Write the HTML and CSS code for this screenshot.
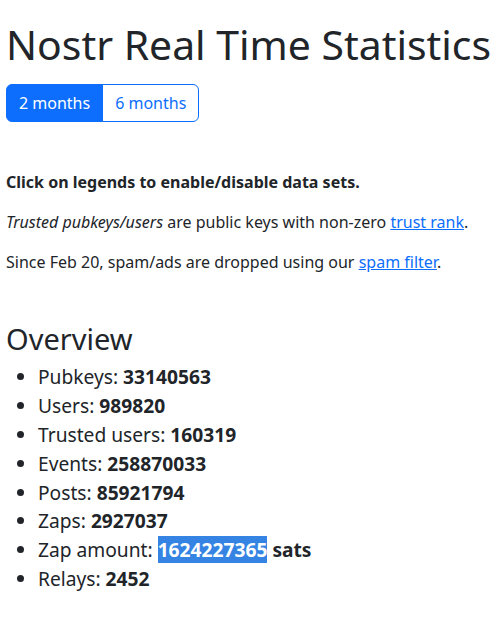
FILE: index.html
```html
<!DOCTYPE html>
<html lang="en">
<head>
<meta charset="utf-8">
<title>Nostr Real Time Statistics</title>
<link rel="stylesheet" href="styles.css">
</head>
<body>
<div class="container">
  <h1 class="title">Nostr Real Time Statistics</h1>
  <div class="btn-group">
    <button class="btn active">2 months</button>
    <button class="btn">6 months</button>
  </div>
  <p class="hint"><b>Click on legends to enable/disable data sets.</b></p>
  <p><i>Trusted pubkeys/users</i> are public keys with non-zero <a href="#">trust rank</a>.</p>
  <p>Since Feb 20, spam/ads are dropped using our <a href="#">spam filter</a>.</p>
  <h2 class="section">Overview</h2>
  <ul class="stats">
    <li>Pubkeys: <b>33140563</b></li>
    <li>Users: <b>989820</b></li>
    <li>Trusted users: <b>160319</b></li>
    <li>Events: <b>258870033</b></li>
    <li>Posts: <b>85921794</b></li>
    <li>Zaps: <b>2927037</b></li>
    <li>Zap amount: <b><span class="sel">1624227365</span> sats</b></li>
    <li>Relays: <b>2452</b></li>
  </ul>
</div>
</body>
</html>
```

FILE: styles.css
```css
* { box-sizing: border-box; }
html, body { margin: 0; padding: 0; }
body {
  font-family: "Noto Sans", "Open Sans", sans-serif;
  font-size: 16px;
  line-height: 1.5;
  color: #212529;
  background: #fff;
}
.container {
  padding: 20px 6px 0 6px;
}
.title {
  font-size: 40.9px;
  font-weight: 400;
  line-height: 1.2;
  white-space: nowrap;
  margin: 0 0 15px 0;
}
.btn-group {
  display: inline-flex;
}
.btn {
  font-family: inherit;
  font-size: 16px;
  line-height: 24px;
  padding: 6px 12px;
  border: 1px solid #0d6efd;
  background: #fff;
  color: #0d6efd;
  margin: 0;
}
.btn:first-child {
  border-radius: 6px 0 0 6px;
}
.btn:last-child {
  border-radius: 0 6px 6px 0;
  margin-left: -1px;
}
.btn.active {
  background: #0d6efd;
  color: #fff;
}
p { margin: 0 0 16px 0; }
.hint { margin-top: 48px; }
b { font-weight: 700; }
a { color: #0d6efd; text-decoration: underline; }
.section {
  font-size: 29px;
  font-weight: 400;
  line-height: 1.2;
  margin: 48px 0 6px 0;
}
.stats {
  margin: 0;
  padding-left: 32px;
  font-size: 19.2px;
}
.stats li {
  line-height: 28.9px;
}
.sel {
  background: #3584e4;
  color: #fff;
}
```
